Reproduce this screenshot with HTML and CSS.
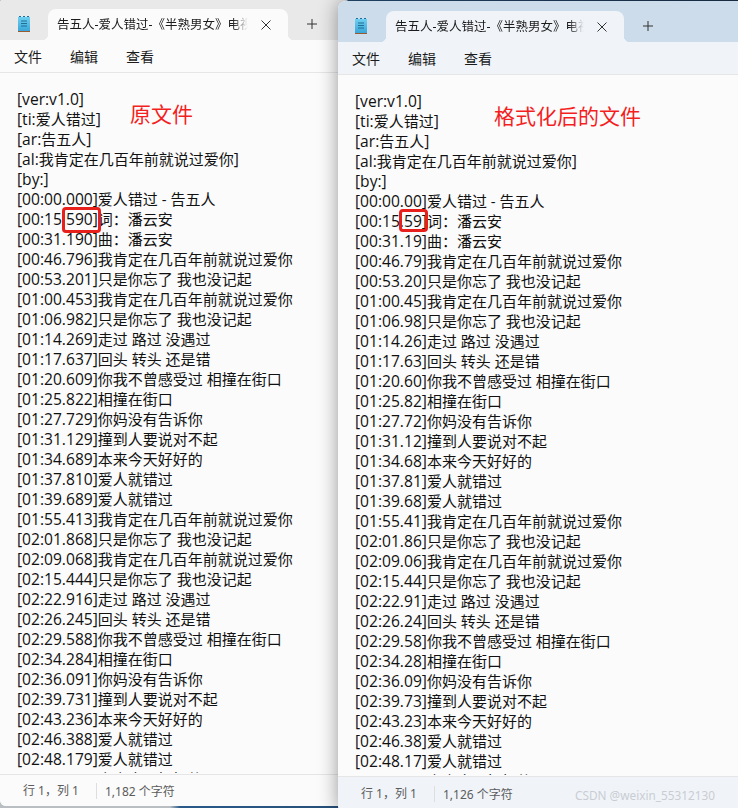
FILE: index.html
```html
<!DOCTYPE html>
<html lang="zh-CN">
<head>
<meta charset="utf-8">
<title>Notepad</title>
<link rel="stylesheet" href="styles.css">
</head>
<body>
<div class="desktop">
  <section class="window window-left">
    <header class="titlebar">
      <svg class="app-icon" viewBox="0 0 12 16" width="12" height="16"><defs><linearGradient id="g1" x1="0" y1="0" x2="0" y2="1"><stop offset="0" stop-color="#6fd0f0"/><stop offset="1" stop-color="#3aa6d8"/></linearGradient></defs><rect x="0" y="1" width="12" height="14" fill="url(#g1)"/><path d="M1 0.5h2M5 0.5h2M9 0.5h2" stroke="#1b6f9c" stroke-width="1.2"/><path d="M3 5h6M3 7.5h6M3 10h6" stroke="#1f6f96" stroke-width="1"/><rect x="0" y="15" width="12" height="1" fill="#9a5a32"/></svg>
      <div class="tab">
        <span class="tab-title">告五人-爱人错过-《半熟男女》电视剧插曲</span>
        <svg class="tab-close" viewBox="0 0 10 10" width="10" height="10"><path d="M0.5 0.5l9 9M9.5 0.5l-9 9" stroke="#333" stroke-width="1" fill="none"/></svg>
      </div>
      <svg class="tab-add" viewBox="0 0 10 10" width="10" height="10"><path d="M5 0v10M0 5h10" stroke="#333" stroke-width="1" fill="none"/></svg>
    </header>
    <nav class="menubar"><span>文件</span><span>编辑</span><span>查看</span></nav>
    <main class="editor">
      <div class="note">原文件</div>
      <div class="marker"></div>
      <pre class="text"><span class="ts">[ver:v1.0]</span>
<span class="ts">[ti:</span>爱人错过<span class="ts">]</span>
<span class="ts">[ar:</span>告五人<span class="ts">]</span>
<span class="ts">[al:</span>我肯定在几百年前就说过爱你<span class="ts">]</span>
<span class="ts">[by:]</span>
<span class="ts">[00:00.000]</span>爱人错过 - 告五人
<span class="ts">[00:15.590]</span>词：潘云安
<span class="ts">[00:31.190]</span>曲：潘云安
<span class="ts">[00:46.796]</span>我肯定在几百年前就说过爱你
<span class="ts">[00:53.201]</span>只是你忘了 我也没记起
<span class="ts">[01:00.453]</span>我肯定在几百年前就说过爱你
<span class="ts">[01:06.982]</span>只是你忘了 我也没记起
<span class="ts">[01:14.269]</span>走过 路过 没遇过
<span class="ts">[01:17.637]</span>回头 转头 还是错
<span class="ts">[01:20.609]</span>你我不曾感受过 相撞在街口
<span class="ts">[01:25.822]</span>相撞在街口
<span class="ts">[01:27.729]</span>你妈没有告诉你
<span class="ts">[01:31.129]</span>撞到人要说对不起
<span class="ts">[01:34.689]</span>本来今天好好的
<span class="ts">[01:37.810]</span>爱人就错过
<span class="ts">[01:39.689]</span>爱人就错过
<span class="ts">[01:55.413]</span>我肯定在几百年前就说过爱你
<span class="ts">[02:01.868]</span>只是你忘了 我也没记起
<span class="ts">[02:09.068]</span>我肯定在几百年前就说过爱你
<span class="ts">[02:15.444]</span>只是你忘了 我也没记起
<span class="ts">[02:22.916]</span>走过 路过 没遇过
<span class="ts">[02:26.245]</span>回头 转头 还是错
<span class="ts">[02:29.588]</span>你我不曾感受过 相撞在街口
<span class="ts">[02:34.284]</span>相撞在街口
<span class="ts">[02:36.091]</span>你妈没有告诉你
<span class="ts">[02:39.731]</span>撞到人要说对不起
<span class="ts">[02:43.236]</span>本来今天好好的
<span class="ts">[02:46.388]</span>爱人就错过
<span class="ts">[02:48.179]</span>爱人就错过
<span class="ts">[02:52.108]</span>本来今天好好的</pre>
    </main>
    <footer class="statusbar"><span class="pos">行 1，列 1</span><span class="count">1,182 个字符</span></footer>
  </section>

  <section class="window window-right">
    <header class="titlebar">
      <svg class="app-icon" viewBox="0 0 12 16" width="12" height="16"><rect x="0" y="1" width="12" height="14" fill="url(#g1)"/><path d="M1 0.5h2M5 0.5h2M9 0.5h2" stroke="#1b6f9c" stroke-width="1.2"/><path d="M3 5h6M3 7.5h6M3 10h6" stroke="#1f6f96" stroke-width="1"/><rect x="0" y="15" width="12" height="1" fill="#9a5a32"/></svg>
      <div class="tab">
        <span class="tab-title">告五人-爱人错过-《半熟男女》电视剧插曲</span>
        <svg class="tab-close" viewBox="0 0 10 10" width="10" height="10"><path d="M0.5 0.5l9 9M9.5 0.5l-9 9" stroke="#333" stroke-width="1" fill="none"/></svg>
      </div>
      <svg class="tab-add" viewBox="0 0 10 10" width="10" height="10"><path d="M5 0v10M0 5h10" stroke="#333" stroke-width="1" fill="none"/></svg>
    </header>
    <nav class="menubar"><span>文件</span><span>编辑</span><span>查看</span></nav>
    <main class="editor">
      <div class="note">格式化后的文件</div>
      <div class="marker"></div>
      <pre class="text"><span class="ts">[ver:v1.0]</span>
<span class="ts">[ti:</span>爱人错过<span class="ts">]</span>
<span class="ts">[ar:</span>告五人<span class="ts">]</span>
<span class="ts">[al:</span>我肯定在几百年前就说过爱你<span class="ts">]</span>
<span class="ts">[by:]</span>
<span class="ts">[00:00.00]</span>爱人错过 - 告五人
<span class="ts">[00:15.59]</span>词：潘云安
<span class="ts">[00:31.19]</span>曲：潘云安
<span class="ts">[00:46.79]</span>我肯定在几百年前就说过爱你
<span class="ts">[00:53.20]</span>只是你忘了 我也没记起
<span class="ts">[01:00.45]</span>我肯定在几百年前就说过爱你
<span class="ts">[01:06.98]</span>只是你忘了 我也没记起
<span class="ts">[01:14.26]</span>走过 路过 没遇过
<span class="ts">[01:17.63]</span>回头 转头 还是错
<span class="ts">[01:20.60]</span>你我不曾感受过 相撞在街口
<span class="ts">[01:25.82]</span>相撞在街口
<span class="ts">[01:27.72]</span>你妈没有告诉你
<span class="ts">[01:31.12]</span>撞到人要说对不起
<span class="ts">[01:34.68]</span>本来今天好好的
<span class="ts">[01:37.81]</span>爱人就错过
<span class="ts">[01:39.68]</span>爱人就错过
<span class="ts">[01:55.41]</span>我肯定在几百年前就说过爱你
<span class="ts">[02:01.86]</span>只是你忘了 我也没记起
<span class="ts">[02:09.06]</span>我肯定在几百年前就说过爱你
<span class="ts">[02:15.44]</span>只是你忘了 我也没记起
<span class="ts">[02:22.91]</span>走过 路过 没遇过
<span class="ts">[02:26.24]</span>回头 转头 还是错
<span class="ts">[02:29.58]</span>你我不曾感受过 相撞在街口
<span class="ts">[02:34.28]</span>相撞在街口
<span class="ts">[02:36.09]</span>你妈没有告诉你
<span class="ts">[02:39.73]</span>撞到人要说对不起
<span class="ts">[02:43.23]</span>本来今天好好的
<span class="ts">[02:46.38]</span>爱人就错过
<span class="ts">[02:48.17]</span>爱人就错过
<span class="ts">[02:52.10]</span>本来今天好好的</pre>
    </main>
    <footer class="statusbar"><span class="pos">行 1，列 1</span><span class="count">1,126 个字符</span></footer>
  </section>
  <div class="watermark">CSDN @weixin_55312130</div>
</div>
</body>
</html>
```

FILE: styles.css
```css
* { box-sizing: border-box; }
html, body { margin: 0; padding: 0; }
body {
  width: 738px;
  height: 808px;
  overflow: hidden;
  font-family: "Noto Sans", "Noto Sans CJK SC", sans-serif;
  color: #1a1a1a;
}
.desktop {
  position: relative;
  width: 738px;
  height: 808px;
  overflow: hidden;
  background: linear-gradient(90deg, #b9bec2 0, #b9bec2 170px, #2a5a8a 180px, #1d3550 100%);
}
.window {
  position: absolute;
  display: flex;
  flex-direction: column;
  overflow: hidden;
  background: #fbfbfb;
}
.window-left {
  left: 0;
  top: 0;
  width: 352px;
  height: 806px;
  border-radius: 3px 8px 6px 6px;
}
.window-right {
  left: 338px;
  top: 1px;
  width: 420px;
  height: 812px;
  border-radius: 8px;
  box-shadow: 0 0 20px rgba(0, 0, 0, 0.4);
  z-index: 1;
}
.titlebar {
  display: flex;
  align-items: flex-end;
  flex: none;
  height: 40px;
  position: relative;
  background: #e9e9e9;
}
.window-right .titlebar { height: 41px; background: #ccdcea; }
.app-icon {
  position: absolute;
  left: 18px;
  top: 16px;
}
.window-right .app-icon { left: 17px; top: 17px; }
.tab {
  position: relative;
  display: flex;
  align-items: center;
  margin-left: 48px;
  width: 240px;
  height: 31px;
  padding: 0 17px 0 9px;
  border-radius: 8px 8px 0 0;
  background: #fbfbfb;
}
.window-right .tab { background: #f0f4f9; margin-left: 48px; width: 238px; }
.tab::before, .tab::after {
  content: "";
  position: absolute;
  bottom: 0;
  width: 6px;
  height: 6px;
}
.tab::before {
  left: -6px;
  background: radial-gradient(circle at 0 0, transparent 6px, #fbfbfb 6.5px);
}
.tab::after {
  right: -6px;
  background: radial-gradient(circle at 100% 0, transparent 6px, #fbfbfb 6.5px);
}
.window-right .tab::before { background: radial-gradient(circle at 0 0, transparent 6px, #f0f4f9 6.5px); }
.window-right .tab::after { background: radial-gradient(circle at 100% 0, transparent 6px, #f0f4f9 6.5px); }
.tab-title {
  flex: 1;
  min-width: 0;
  overflow: hidden;
  white-space: nowrap;
  font-size: 12.5px;
  line-height: 20px;
  color: #1c1c1c;
  -webkit-mask-image: linear-gradient(90deg, #000 92%, transparent);
  mask-image: linear-gradient(90deg, #000 92%, transparent);
}
.tab-close { flex: none; margin-left: 13px; }
.tab-add { margin-left: 19px; margin-bottom: 11px; }
.menubar {
  display: flex;
  flex: none;
  gap: 28px;
  align-items: center;
  height: 33px;
  padding: 0 0 1px 14px;
  border-bottom: 1px solid #e6e6e6;
  background: #fbfbfb;
  font-size: 14px;
  color: #1c1c1c;
}
.window-right .menubar { background: #f0f4f9; }
.editor {
  position: relative;
  flex: 1;
  min-height: 0;
  overflow: hidden;
  background: #fbfbfb;
}
.text {
  margin: 0;
  height: 700px;
  overflow: hidden;
  padding: 16px 0 0 17px;
  font-family: "Open Sans", "Noto Sans CJK SC", sans-serif;
  font-size: 15px;
  line-height: 20px;
  color: #111;
  white-space: pre;
}
.ts { font-size: 15.6px; line-height: 1; }
.note {
  position: absolute;
  top: 27px;
  left: 130px;
  font-size: 21px;
  line-height: 28px;
  color: #f41f1f;
}
.window-right .note { left: 156px; top: 27px; }
.marker {
  position: absolute;
  left: 62px;
  top: 134px;
  width: 39px;
  height: 26px;
  border: 3px solid #e8201c;
  border-radius: 4px;
}
.window-right .marker { left: 61px; width: 29px; height: 23px; }
.statusbar {
  display: flex;
  flex: none;
  align-items: center;
  height: 32px;
  border-top: 1px solid #e6e6e6;
  background: #fbfbfb;
  font-size: 12px;
  color: #5c5c5c;
}
.window-right .statusbar { background: #f0f4f9; height: 37px; padding-bottom: 3px; }
.pos {
  padding: 0 21px 0 23px;
  width: 97px;
  white-space: nowrap;
  border-right: 1px solid #dedede;
  line-height: 16px;
}
.count { padding-left: 8px; white-space: nowrap; }
.watermark {
  position: absolute;
  right: 23px;
  top: 787px;
  z-index: 2;
  font-size: 11.8px;
  line-height: 16px;
  color: #c9cdd2;
  white-space: nowrap;
}
```
